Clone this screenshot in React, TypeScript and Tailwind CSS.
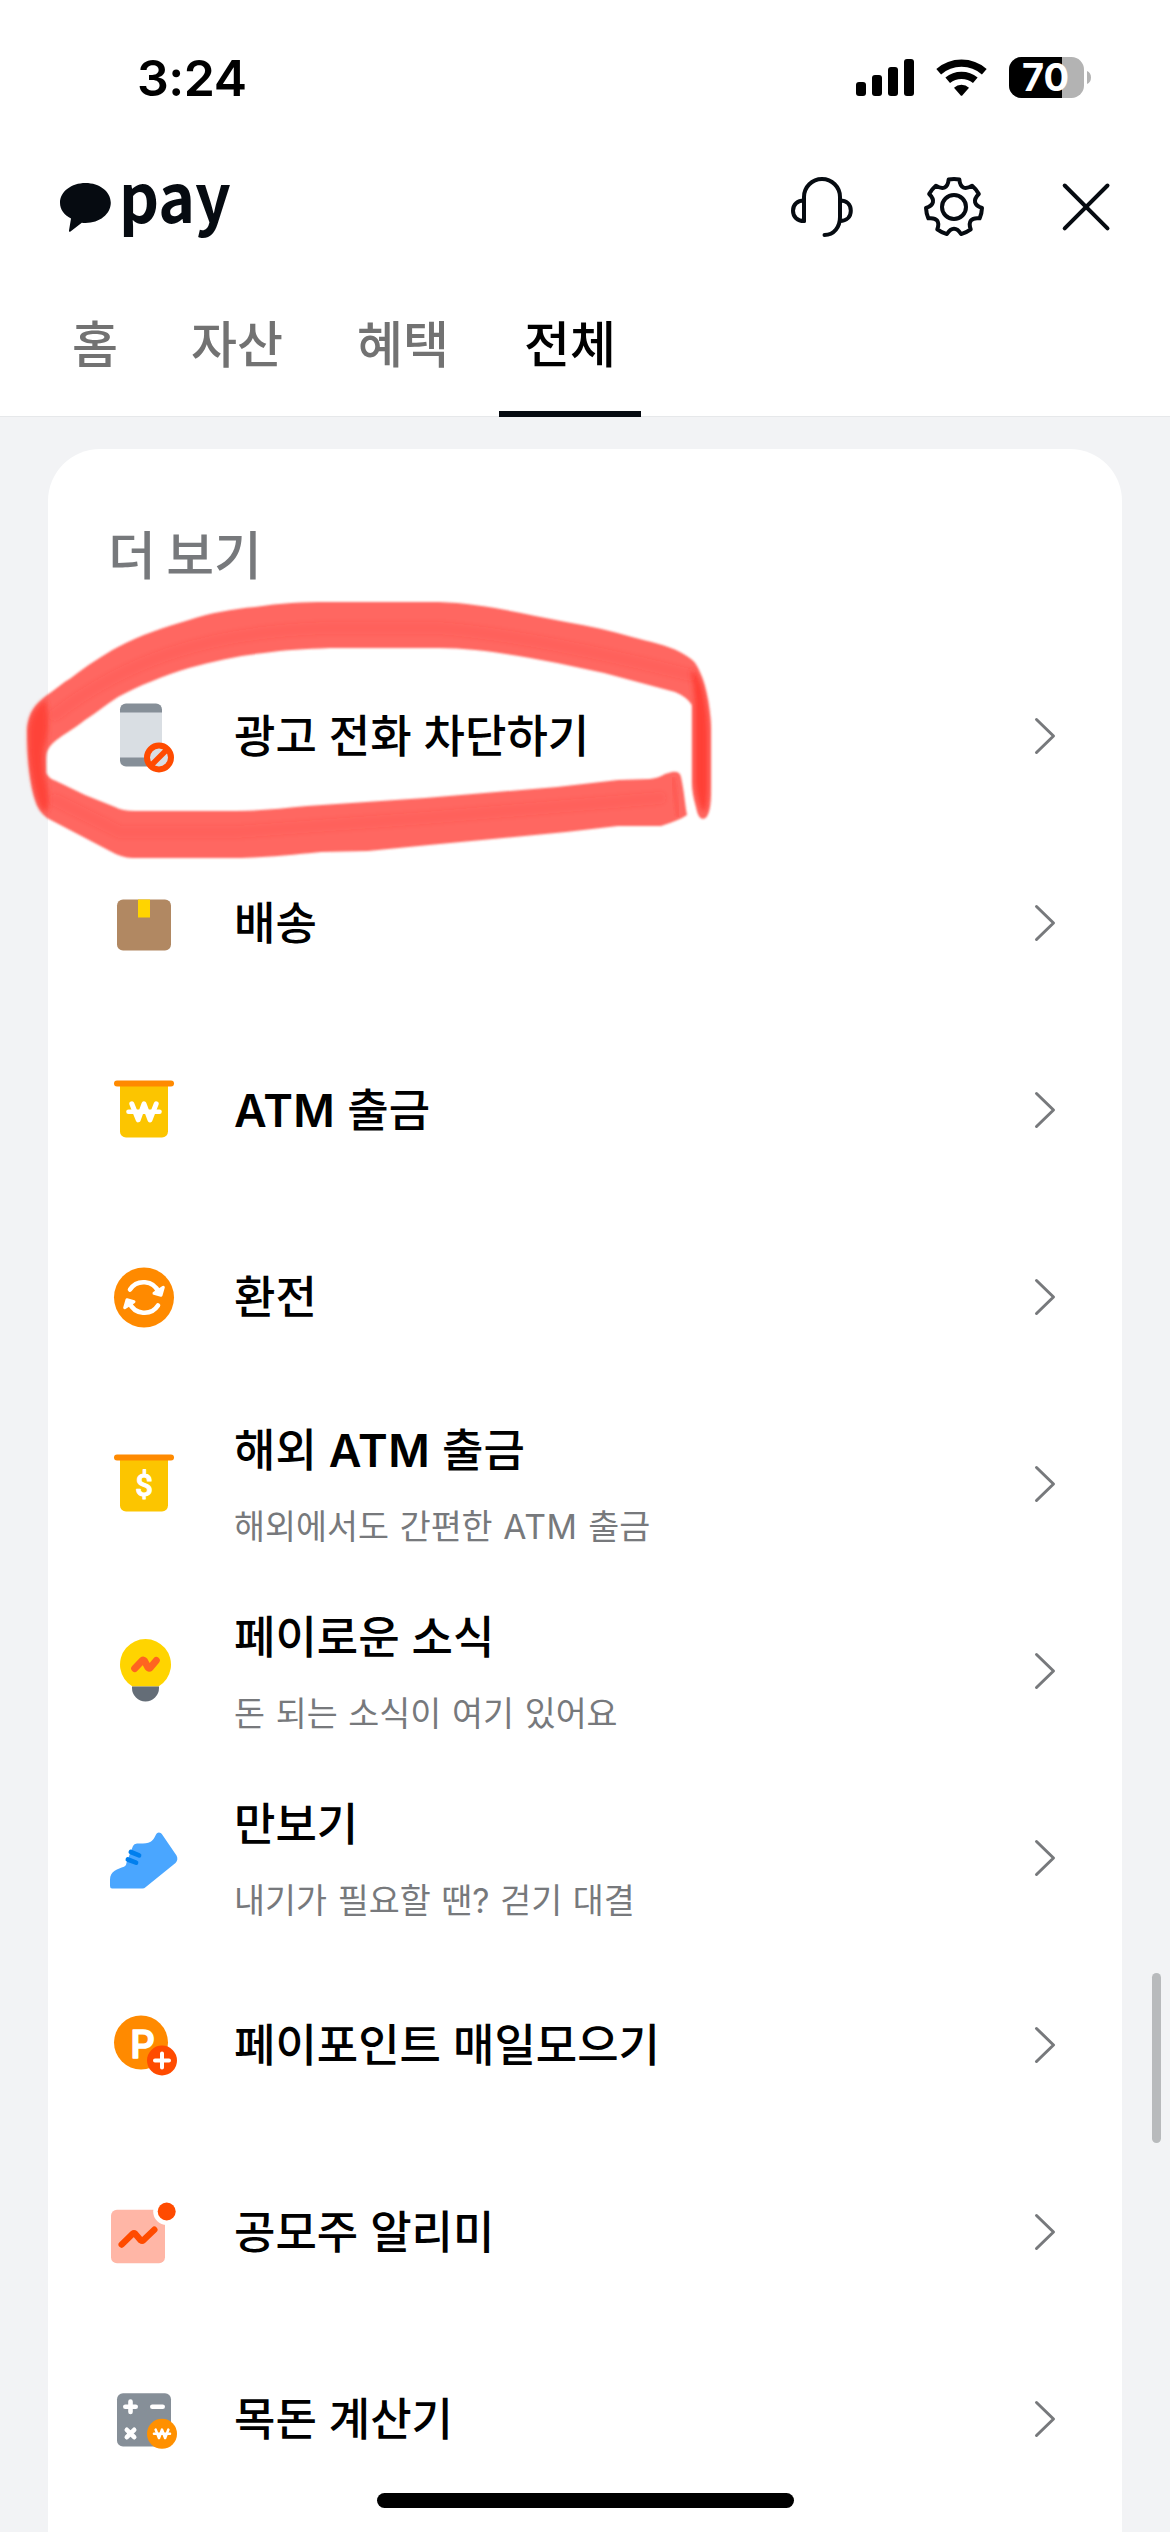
import React from "react";

const stroke = { fill: "none", strokeLinecap: "round", strokeLinejoin: "round" } as const;

function gearPath(cx: number, cy: number, teeth: number): string {
  const pt = (deg: number, r: number) => {
    const a = (deg * Math.PI) / 180;
    return `${(cx + r * Math.cos(a)).toFixed(2)} ${(cy + r * Math.sin(a)).toFixed(2)}`;
  };
  const step = 360 / teeth;
  let d = `M${pt(-90 - 11, 28)}`;
  for (let i = 0; i < teeth; i++) {
    const a = -90 + i * step;
    d += `A28 28 0 0 1 ${pt(a + 11, 28)}C${pt(a + 18, 20)} ${pt(a + step - 18, 20)} ${pt(a + step - 11, 28)}`;
  }
  return d + "Z";
}

function StatusIcons() {
  return (
    <svg width="240" height="50" viewBox="0 0 240 50" className="block">
      <rect x="4" y="29" width="10" height="14" rx="3" />
      <rect x="20" y="22" width="10" height="21" rx="3" />
      <rect x="36" y="14" width="10" height="29" rx="3" />
      <rect x="52" y="6" width="10" height="37" rx="3" />
      <g fill="none" stroke="#000" strokeWidth="7.200">
        <path d="M86.700 18.800a34.500 34.500 0 0 1 45.600 0" />
        <path d="M95.700 27.300a21.500 21.500 0 0 1 27.600 0" />
      </g>
      <path d="M102 34.800a11 11 0 0 1 15 0l-6.500 7.500q-1 1-2 0z" />
      <clipPath id="battery">
        <rect x="157" y="4" width="75" height="41" rx="12.500" />
      </clipPath>
      <g clipPath="url(#battery)">
        <rect x="157" y="4" width="75" height="41" fill="#b3b3b3" />
        <rect x="157" y="4" width="53" height="41" />
      </g>
      <path d="M235 18q4 1.800 4 6.500t-4 6.500z" fill="#b3b3b3" />
      <text x="193.500" y="38" textAnchor="middle" fontSize="38" fontWeight="700" fill="#fff" className="font-['Inter']">
        70
      </text>
    </svg>
  );
}

function Logo() {
  return (
    <div className="flex h-[66px] w-[180px] text-[#060b11]">
      <svg width="64" height="66" viewBox="0 0 64 66" className="shrink-0" fill="currentColor">
        <path d="M34.500 9c14 0 25.300 8.500 25.300 19.800S48.500 49 34.500 49q-2 0-3.700-.3L19.500 57.500q-1.800 1-1.500-1l2-12C13 41 9 35.500 9 28.800 9 17.500 20.500 9 34.500 9Z" />
      </svg>
      <span className="-mt-[21px] ml-[4px] h-[100px] origin-left scale-x-[.93] font-['Noto_Sans_CJK_KR'] text-[67px] leading-[82px] font-bold">
        pay
      </span>
    </div>
  );
}

function Headset() {
  return (
    <svg width="68" height="66" viewBox="0 0 68 66" {...stroke} stroke="#060b11" strokeWidth="4">
      <path d="M16 47V23a18 18 0 0 1 36 0v20c0 10-6 18-15.500 18" />
      <path d="M16 26.500c-6.500 0-11 4-11 10.200S9.500 47 16 47" />
      <path d="M52 26.500c6.500 0 10.800 4 10.800 10.200S58.500 47 52 47" />
    </svg>
  );
}

function Gear() {
  return (
    <svg width="66" height="66" viewBox="0 0 66 66" {...stroke} stroke="#060b11" strokeWidth="4">
      <path d={gearPath(33, 33, 7)} />
      <circle cx="33" cy="33" r="12" />
    </svg>
  );
}

function Close() {
  return (
    <svg width="66" height="66" viewBox="0 0 66 66" {...stroke} stroke="#060b11" strokeWidth="4">
      <path d="M11.700 11.500l42.800 42.800M54.500 11.500L11.700 54.300" />
    </svg>
  );
}

const Won = ({ x, y, s }: { x: number; y: number; s: number }) => (
  <g transform={`translate(${x} ${y}) scale(${s})`} {...stroke} stroke="#fff">
    <path strokeWidth="5" d="M-12.200 -8l6.400 16L0 -8l6 16l6.200 -16" />
    <path strokeWidth="4.600" d="M-15.500 0H15.500" />
  </g>
);

const AtmBody = () => (
  <>
    <path d="M16 13.500h48v48a6 6 0 0 1-6 6H22a6 6 0 0 1-6-6z" fill="#fcc500" />
    <rect x="10" y="10.500" width="60" height="6" rx="3" fill="#ff8a00" />
  </>
);

const icons: Record<string, React.ReactNode> = {
  phone: (
    <>
      <rect x="16" y="7.500" width="42" height="63" rx="6" fill="#868f98" />
      <rect x="16" y="16.500" width="42" height="45" fill="#d9dee3" />
      <circle cx="55" cy="61.500" r="12" fill="#d9dee3" stroke="#ff4b00" strokeWidth="6" />
      <path d="M48 68.500l14-14" stroke="#ff4b00" strokeWidth="5.500" />
    </>
  ),
  box: (
    <>
      <rect x="13" y="16.500" width="54" height="51" rx="6" fill="#b18862" />
      <rect x="34" y="16.500" width="12" height="18" fill="#ffd400" />
    </>
  ),
  atm: (
    <>
      <AtmBody />
      <Won x={40} y={41.8} s={1} />
    </>
  ),
  exchange: (
    <>
      <circle cx="40" cy="40.500" r="30" fill="#ff8a00" />
      {[0, 180].map((r) => (
        <g key={r} transform={`rotate(${r} 40 40.500)`} stroke="#fff" strokeLinecap="round" strokeLinejoin="round">
          <path d="M26 32.500a16.300 16.300 0 0 1 28.500 2.500" fill="none" strokeWidth="4.600" />
          <path d="M59.300 30.300L57 38.300L50 36.300Z" fill="#fff" strokeWidth="3" />
        </g>
      ))}
    </>
  ),
  dollar: (
    <>
      <AtmBody />
      <text x="40" y="51.800" fontSize="31" fontWeight="500" textAnchor="middle" fill="#fff" stroke="#fff" strokeWidth="1" strokeLinejoin="round" className="font-['Roboto']">
        $
      </text>
    </>
  ),
  bulb: (
    <>
      <path d="M28.500 55.500a25.500 25.500 0 1 1 26 0z" fill="#ffd400" />
      <path d="M28 55.500h27v1.500a13.500 13.500 0 0 1-27 0z" fill="#646d77" />
      <path d="M30.700 37.500l7.600-8q1.200-1 2.200.4l3.500 6.600q1 1.400 2.200.2l6.100-7.200" {...stroke} stroke="#ff6420" strokeWidth="7" />
    </>
  ),
  shoe: (
    <>
      <path
        d="M6 68V61.500C6 53 14 51 20 48.700C22.500 47.500 22 46 22.700 44L29 28Q30 25.500 33 25.500H39C47.500 25.500 49.500 21.500 51.500 17.500C53 14 56 13.500 58.500 17L72.500 37.500Q74.600 41.500 71.500 45L41.500 69.200Q40.300 70.500 38.500 70.500H8Q6 70.500 6 68Z"
        fill="#4aa6ff"
      />
      <path d="M26.800 34l8.300 3.300M23.800 41.500l8.300 3.200" {...stroke} stroke="#007fee" strokeWidth="4.600" />
    </>
  ),
  point: (
    <>
      <circle cx="37" cy="37.500" r="27" fill="#ff8a00" />
      <text x="38.500" y="52.700" fontSize="38.500" fontWeight="500" textAnchor="middle" fill="#fff" stroke="#fff" strokeWidth="1.600" strokeLinejoin="round" className="font-['Inter']">
        P
      </text>
      <circle cx="58" cy="55.500" r="15" fill="#ff4b00" />
      <path d="M51 55.500h14M58 48.500v14" {...stroke} stroke="#fff" strokeWidth="4" />
    </>
  ),
  stock: (
    <>
      <rect x="7" y="17.800" width="54" height="53.400" rx="6" fill="#ffb6a6" />
      <circle cx="62.700" cy="19.500" r="13.500" fill="#fff" />
      <circle cx="62.700" cy="19.500" r="9" fill="#ff4b00" />
      <path d="M17.700 52.500l11-10.700q1.300-1 2.500 0l5.600 6.500q1.300 1 2.500 0l11-10.600" {...stroke} stroke="#ff4b00" strokeWidth="6.400" />
    </>
  ),
  calc: (
    <>
      <rect x="13" y="14.200" width="54" height="53.300" rx="6" fill="#868f98" />
      <path d="M21.300 27.800h10.400M26.500 22.600v10.400M48.300 27.800h10.400M22.800 50.800l7.400 7.400M30.200 50.800l-7.400 7.400" {...stroke} stroke="#fff" strokeWidth="4.600" />
      <circle cx="58" cy="54.800" r="15" fill="#ff9000" />
      <Won x={58} y={54.8} s={0.52} />
    </>
  ),
};

const rows: { icon: string; title: string; sub?: string }[] = [
  { icon: "phone", title: "광고 전화 차단하기" },
  { icon: "box", title: "배송" },
  { icon: "atm", title: "ATM 출금" },
  { icon: "exchange", title: "환전" },
  { icon: "dollar", title: "해외 ATM 출금", sub: "해외에서도 간편한 ATM 출금" },
  { icon: "bulb", title: "페이로운 소식", sub: "돈 되는 소식이 여기 있어요" },
  { icon: "shoe", title: "만보기", sub: "내기가 필요할 땐? 걷기 대결" },
  { icon: "point", title: "페이포인트 매일모으기" },
  { icon: "stock", title: "공모주 알리미" },
  { icon: "calc", title: "목돈 계산기" },
];

/* Latin words are set slightly heavier and wider than the Hangul around them. */
function Label({ text, latin }: { text: string; latin: string }) {
  return (
    <>
      {text.split(/([A-Z]+)/).map((part, i) =>
        i % 2 ? (
          <span key={i} className={latin}>
            {part}
          </span>
        ) : (
          part
        ),
      )}
    </>
  );
}

function Row({ icon, title, sub }: { icon: string; title: string; sub?: string }) {
  return (
    <li className="flex h-[187px] items-center pr-[64px] pl-[56px]">
      <svg width="80" height="80" viewBox="0 0 80 80" className="shrink-0">
        {icons[icon]}
      </svg>
      <div className={`ml-[50px] flex flex-1 flex-col gap-[13px] whitespace-nowrap ${sub ? "pt-[7px]" : "pt-[2px]"}`}>
        <span className="text-[45px] leading-[66px] font-medium text-black">
          <Label text={title} latin="font-semibold tracking-[0.4px]" />
        </span>
        {sub && (
          <span className="text-[33.7px] leading-[60px] text-[#77797c] [word-spacing:1.2px]">
            <Label text={sub} latin="tracking-[0.6px]" />
          </span>
        )}
      </div>
      <svg width="24" height="40" viewBox="0 0 24 40" {...stroke} stroke="#77797c" strokeWidth="3">
        <path d="M2.500 3.500L19.500 20L2.500 36.500" />
      </svg>
    </li>
  );
}

const tabs = [
  { label: "홈", pad: "ml-[43px] w-[104px]" },
  { label: "자산", pad: "ml-[19px] w-[142px]" },
  { label: "혜택", pad: "ml-[24px] w-[142px]" },
  { label: "전체", pad: "ml-[25px] w-[142px]" },
];

function MarkerLoop() {
  return (
    <svg width="740" height="320" viewBox="0 570 740 320" className="pointer-events-none absolute top-[570px] left-0">
      <defs>
        <filter id="soft" x="-5%" y="-5%" width="110%" height="110%">
          <feGaussianBlur stdDeviation="1.300" />
        </filter>
        <filter id="softer" x="-60%" y="-20%" width="220%" height="140%">
          <feGaussianBlur stdDeviation="2.500" />
        </filter>
      </defs>
      <path
        filter="url(#soft)"
        fill="#ff3b30"
        fillOpacity=".77"
        d="M27 730C28 713 35 704 47 695C58 688 62 683 71 678C88 665 103 655 118 647C140 635 165 627 189 620C210 613 232 609 255 607C280 603 303 602 326 602H439C480 603 525 614 566 622C590 626 612 631 632 637C650 642 667 645 680 652C691 658 696 662 699 670C704 680 706 690 708 700C710 712 711 721 711 730V783C711 795 711 800 710 807Q708 819 703 819Q698 819 696 807Q692 793 692 783V705Q687 697 675 692L604 673L557 663C515 655 475 648 439 648H330C305 649 285 650 264 653C238 656 213 661 189 668C163 676 138 686 118 697C107 704 96 713 85 720C74 729 60 736 52 744Q46 750 46 758V773Q48 778 56 781L85 795L115 807Q122 811 135 811H236C260 811 285 808 307 806L425 798L557 787L618 780L650 779Q659 778 665 774L672 772Q680 771 681 777C684 790 685 804 687 815Q680 820 661 826H618L566 832L429 845L368 851L321 852C290 855 260 858 236 858H132Q122 858 108 850L47 818Q38 811 35 800C30 785 27 758 27 730Z"
      />
      <g filter="url(#softer)" fill="#ff3b30">
        <path fillOpacity=".8" d="M29 728C31 713 38 705 46 700C49 718 49 735 44 748C43 758 43 774 47 785Q50 804 47 812Q40 810 37 798C30 775 28 750 29 728Z" />
        <path fillOpacity=".9" d="M691 670Q699 674 703 690Q708 710 708 735V785Q708 806 704 813Q698 806 695 785V710Q695 695 691 670Z" />
      </g>
      <g {...stroke} stroke="#ff3b30" strokeOpacity=".12" strokeWidth="12" filter="url(#softer)">
        <path d="M55 715C120 665 200 632 326 628H439C520 635 610 655 690 675" />
        <path d="M55 800L120 832H236L425 818L660 798" />
      </g>
      <path d="M673 779L678 815" {...stroke} stroke="#ff3b30" strokeOpacity=".25" strokeWidth="5" filter="url(#soft)" />
    </svg>
  );
}

export default function App() {
  return (
    <div className="relative flex h-[2532px] w-[1170px] flex-col overflow-hidden bg-[#f2f3f5] font-['Inter','Noto_Sans_CJK_KR',sans-serif]">
      <header className="h-[417px] shrink-0 border-b border-[#e6e8ea] bg-white">
        <div className="flex h-[156px] items-start justify-between pr-[78px] pl-[137px]">
          <span className="mt-[48px] text-[50px] leading-[60px] font-semibold tracking-[-0.5px]">3:24</span>
          <div className="mt-[53px]">
            <StatusIcons />
          </div>
        </div>
        <div className="flex h-[102px] items-start pl-[51px]">
          <div className="mt-[18px]">
            <Logo />
          </div>
          <div className="mt-[18px] ml-[557px] flex">
            <Headset />
            <div className="ml-[65px] flex gap-[66px]">
              <Gear />
              <Close />
            </div>
          </div>
        </div>
        <nav className="flex h-[159px]">
          {tabs.map((t, i) => (
            <div
              key={t.label}
              className={`${t.pad} relative flex justify-center text-[50px] leading-[74px] font-medium ${i === 3 ? "text-black" : "text-[#727272]"}`}
            >
              <span className="mt-[50px]">{t.label}</span>
              {i === 3 && <span className="absolute inset-x-0 bottom-0 h-[6px] bg-[#060b11]" />}
            </div>
          ))}
        </nav>
      </header>
      <main className="mx-[48px] mt-[32px] h-[2200px] shrink-0 rounded-t-[52px] bg-white">
        <h2 className="h-[193px] pt-[70px] pl-[60px] text-[52px] leading-[76px] font-medium text-[#77797c] [word-spacing:-3.5px]">더 보기</h2>
        <ul>
          {rows.map((r) => (
            <Row key={r.title} {...r} />
          ))}
        </ul>
      </main>
      <MarkerLoop />
      <div className="absolute top-[1973px] right-[9px] h-[170px] w-[9px] rounded-full bg-[#b8babc]" />
      <div className="absolute bottom-[24px] left-[377px] h-[15px] w-[417px] rounded-full bg-black" />
    </div>
  );
}
